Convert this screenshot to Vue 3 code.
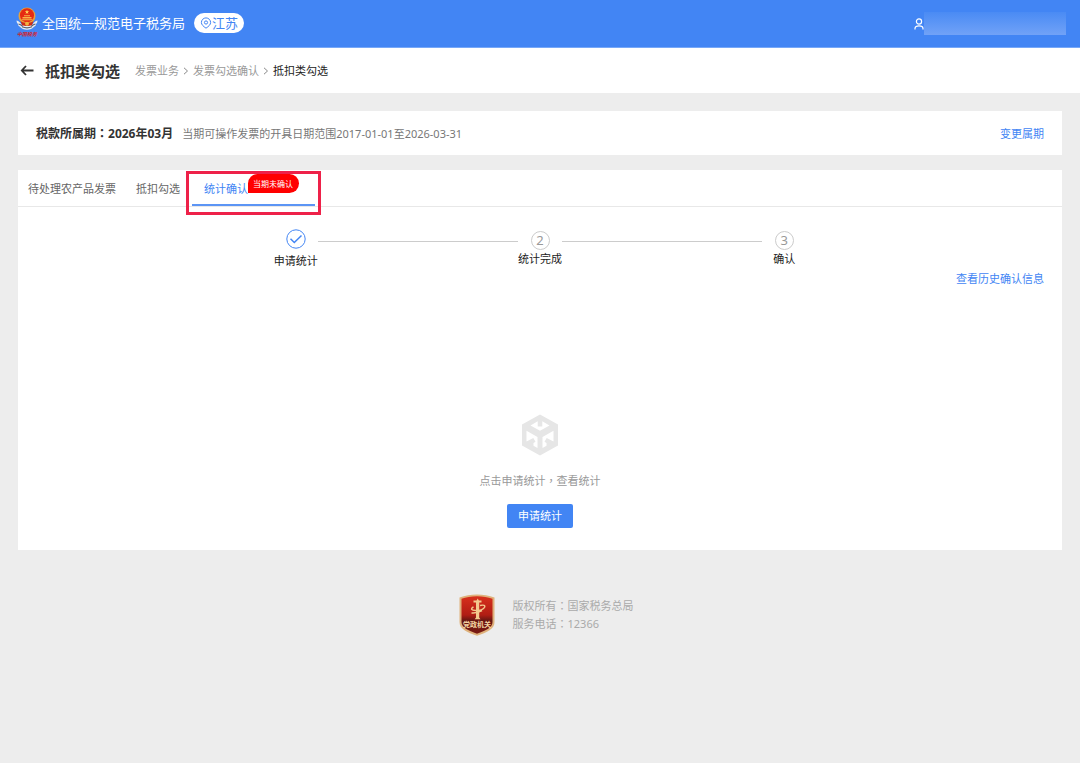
<template>
	<div class="page">
		<header class="topbar">
			<svg class="emblem" viewBox="0 0 22 32" aria-hidden="true">
				<path d="M0.500 13.500c2.500 .6 3.500 2 5 4h11c1.500-2 2.500-3.400 5-4-.1 1.600-.5 2.700-1.500 3.400 0 1.300-.7 2.300-2 2.800-1.500 1.900-4 3-7 3s-5.500-1.100-7-3c-1.300-.5-2-1.500-2-2.800-1-.7-1.400-1.800-1.500-3.400z" fill="#e9edf2"/>
				<path d="M2.500 17c2 .4 3 1.200 4.200 2.200M19.500 17c-2 .4-3 1.200-4.200 2.200" stroke="#5a5f70" stroke-width="1.200" fill="none"/>
				<circle cx="11" cy="9" r="8.500" fill="#e8a13c"/>
				<circle cx="11" cy="8.300" r="7" fill="#e52a12"/>
				<path d="M11 2.800l.6 1.500h1.600l-1.300 1 .5 1.600-1.400-1-1.400 1 .5-1.600-1.300-1h1.600z" fill="#ffd75a"/>
				<path d="M6.500 10h9v1.500h-9zM8 8.300h6v1h-6zM5.800 12.200h10.400v1H5.800z" fill="#f7b648"/>
				<path d="M4.500 14c2 1.500 4 1.700 6.500 1.700s4.500-.2 6.500-1.700l-1.500 4c-1.500.8-3 1-5 1s-3.500-.2-5-1z" fill="#cf2a17"/>
				<circle cx="11" cy="16.800" r="2" fill="#f2b13e"/>
				<path d="M6 19.800c3 1.200 7 1.200 10 0" stroke="#5a5f70" stroke-width="1.200" fill="none"/>
				<text x="11" y="29" text-anchor="middle" class="emblem-text">中国税务</text>
			</svg>
			<span class="site-name">全国统一规范电子税务局</span>
			<button type="button" class="region">
				<svg viewBox="0 0 12 12" width="12" height="12" fill="none" stroke="currentColor" aria-hidden="true">
					<path d="M6 11.200C3.300 9.300 1.400 7.700 1.400 5.500a4.600 4.600 0 0 1 9.200 0C10.600 7.700 8.700 9.300 6 11.200z"/>
					<circle cx="6" cy="5.500" r="1.600"/>
				</svg>
				江苏
			</button>
			<div class="user">
				<svg viewBox="0 0 10 12" width="10" height="12" fill="none" stroke="#fff" stroke-width="1.200" aria-hidden="true">
					<circle cx="5" cy="3.500" r="2.600"/>
					<path d="M1 11.500V10.500C1 8.600 2.500 7.800 5 7.800s4 .8 4 2.700v1"/>
				</svg>
				<span class="user-name"></span>
			</div>
		</header>

		<div class="crumb-bar">
			<button type="button" class="back" aria-label="返回">
				<svg viewBox="0 0 14 12" width="14" height="12" fill="none" stroke="#333" stroke-width="1.800" aria-hidden="true">
					<path d="M6 1L1.800 5.500 6 10M2 5.500h11.500"/>
				</svg>
			</button>
			<h1>抵扣类勾选</h1>
			<nav class="crumbs">
				<template v-for="(item, i) in crumbs" :key="item">
					<svg v-if="i > 0" viewBox="0 0 6 8" width="6" height="8" fill="none" stroke="#888" aria-hidden="true">
						<path d="M1 0.800L4.500 4 1 7.200"/>
					</svg>
					<a v-if="i < crumbs.length - 1" href="#">{{ item }}</a>
					<span v-else class="current">{{ item }}</span>
				</template>
			</nav>
		</div>

		<main>
			<section class="card period">
				<strong>税款所属期<span class="punct">：</span>2026年03月</strong>
				<span class="range">当期可操作发票的开具日期范围2017-01-01至2026-03-31</span>
				<a href="#" class="change">变更属期</a>
			</section>

			<section class="card">
				<div class="tabs" role="tablist">
					<button
						v-for="tab in tabs"
						:key="tab.name"
						type="button"
						role="tab"
						class="tab"
						:class="{ active: tab.name === activeTab }"
						:aria-selected="tab.name === activeTab"
						@click="activeTab = tab.name"
					>
						{{ tab.name }}
						<span v-if="tab.badge" class="badge">{{ tab.badge }}</span>
						<span v-if="tab.badge" class="frame"></span>
					</button>
				</div>

				<div class="steps">
					<template v-for="(step, i) in steps" :key="step">
						<span v-if="i > 0" class="line"></span>
						<div class="step" :class="{ done: i === 0 }">
							<svg v-if="i === 0" viewBox="0 0 20 20" width="20" height="20" fill="none" stroke="#4285f4" aria-hidden="true">
								<circle cx="10" cy="10" r="9.200"/>
								<path d="M4.500 9.800l3.800 3.700 7.200-7" stroke-width="1.500"/>
							</svg>
							<span v-else class="num">{{ i + 1 }}</span>
							<span class="label">{{ step }}</span>
						</div>
					</template>
				</div>

				<div class="history">
					<a href="#">查看历史确认信息</a>
				</div>

				<div class="empty">
					<svg viewBox="0 0 38 42" width="38" height="42" aria-hidden="true">
						<path d="M19 0.500L37 10.500V31.500L19 41.500 1 31.500V10.500z" fill="#e6e6e6"/>
						<path d="M16.700 7.300L9.500 11.500 19 16.800 28.500 11.500 21.300 7.300V12.500h-4.600z" fill="#fff"/>
						<path d="M5.500 16.800L16.500 23V34L12.500 31.800V29L14.500 27.800 12.300 24 5.500 27.500z" fill="#fff"/>
						<path d="M32.500 16.800L21.500 23V34L25.500 31.800V29L23.500 27.800 25.700 24 32.500 27.500z" fill="#fff"/>
					</svg>
					<p>点击申请统计<span class="punct">，</span>查看统计</p>
					<button type="button" class="primary">申请统计</button>
				</div>
			</section>
		</main>

		<footer>
			<svg viewBox="0 0 36 42" width="36" height="42" aria-hidden="true">
				<defs>
					<linearGradient id="shield" x1="0" y1="0" x2="0" y2="1">
						<stop offset="0" stop-color="#d8301c"/>
						<stop offset="0.500" stop-color="#b01d14"/>
						<stop offset="0.650" stop-color="#651712"/>
						<stop offset="1" stop-color="#7c1a12"/>
					</linearGradient>
				</defs>
				<path d="M18 0.500C24 0.500 30 1.500 35.500 3.500V28C35.500 35 28 38.500 18 41.800 8 38.500 0.500 35 0.500 28V3.500C6 1.500 12 0.500 18 0.500z" fill="#dfb27c"/>
				<path d="M18 2.300C24 2.300 29 3.200 33.500 4.800V28C33.500 33.500 27 36.500 18 39.700 9 36.500 2.500 33.500 2.500 28V4.800C7 3.200 12 2.300 18 2.300z" fill="url(#shield)"/>
				<path d="M17 8.500h-2.500V6.500h3L18.700 4.500l1.200 2h2.600v2h-2.300v15l1.300 1.800h-5.800l1.300-1.800z" fill="#f3c98d"/>
				<path d="M21 11.500c4-1 5.500 0 4.500 1.800-1.200 2-5 3.200-9 3.200-4 0-5.500-1.500-2-3.700M12.500 19c4 .3 8-.8 10.500-2.300" stroke="#f3c98d" stroke-width="1.400" fill="none"/>
				<text x="18" y="33" text-anchor="middle" class="shield-text">党政机关</text>
			</svg>
			<div class="info">
				<p>版权所有<span class="punct">：</span>国家税务总局</p>
				<p>服务电话<span class="punct">：</span>12366</p>
			</div>
		</footer>
	</div>
</template>

<script setup>
import { ref } from 'vue';

const crumbs = ['发票业务', '发票勾选确认', '抵扣类勾选'];

const tabs = [
	{ name: '待处理农产品发票' },
	{ name: '抵扣勾选' },
	{ name: '统计确认', badge: '当期未确认' },
];
const activeTab = ref('统计确认');

const steps = ['申请统计', '统计完成', '确认'];
</script>

<style>
body {
	margin: 0;
	background: #ededed;
}
</style>

<style scoped>
.page {
	min-height: 100vh;
	background: #ededed;
	color: #333;
	font-family: "Noto Sans", "Noto Sans CJK SC", sans-serif;
	font-size: 11px;
	line-height: 18px;
}

a {
	color: #4285f4;
	text-decoration: none;
}

button {
	padding: 0;
	border: 0;
	background: none;
	color: inherit;
	font: inherit;
	cursor: pointer;
}

p,
h1 {
	margin: 0;
}

.punct {
	font-family: "Noto Sans CJK TC", sans-serif;
	line-height: 1;
}

.topbar {
	display: flex;
	align-items: center;
	height: 47px;
	padding: 0 14px 0 16px;
	border-bottom: 1px solid #77a8f8;
	background: #4285f4;
	color: #fff;
}

.emblem {
	width: 22px;
	height: 32px;
	margin-bottom: 2px;
}

.emblem-text {
	fill: #d3242f;
	font-size: 5px;
	font-style: italic;
	font-weight: bold;
}

.site-name {
	margin: 0 9px 2px 4px;
	font-size: 13px;
}

.region {
	display: flex;
	align-items: center;
	height: 20px;
	margin-bottom: 2px;
	padding: 0 6px;
	border-radius: 10px;
	background: #fff;
	color: #4285f4;
	font-size: 13px;
}

.user {
	display: flex;
	align-items: center;
	margin-left: auto;
}

.user-name {
	width: 142px;
	height: 23px;
	background: linear-gradient(#4a8bf4, #71a2f7);
}

.crumb-bar {
	display: flex;
	align-items: center;
	height: 45px;
	padding: 0 20px;
	background: #fff;
}

.back {
	display: flex;
}

h1 {
	margin: 0 15px 0 11px;
	font-size: 15px;
	line-height: 20px;
}

.crumbs {
	display: flex;
	align-items: center;
	gap: 4px;
	padding-top: 1px;
}

.crumbs a {
	color: #999;
}

.crumbs .current {
	color: #222;
}

main {
	display: flex;
	flex-direction: column;
	gap: 15px;
	padding: 18px 18px 0;
}

.card {
	background: #fff;
}

.period {
	display: flex;
	align-items: center;
	gap: 9px;
	padding: 14px 18px 12px;
}

.period strong {
	font-size: 12px;
}

.range {
	color: #777;
}

.change {
	margin-left: auto;
}

.tabs {
	display: flex;
	height: 36px;
	border-bottom: 1px solid #e8e8e8;
}

.tab {
	position: relative;
	display: flex;
	align-items: center;
	padding: 2px 10px 0;
	color: #666;
}

.tab.active {
	margin-left: 2px;
	padding: 4px 16px 0 12px;
	border-bottom: 2px solid #5c95f5;
	color: #4285f4;
}

.badge {
	align-self: flex-start;
	padding: 0 6px 0 5px;
	border-radius: 10px 10px 10px 0;
	background: #f00;
	color: #fff;
	font-size: 8px;
	line-height: 19px;
}

.frame {
	position: absolute;
	inset: 1px -6px -11px -6px;
	border: 3px solid #ee2149;
	pointer-events: none;
}

.steps {
	display: flex;
	align-items: flex-start;
	width: 51%;
	margin: 0 auto;
	padding-top: 22px;
}

.step {
	display: flex;
	flex-direction: column;
	align-items: center;
	width: 44px;
	padding-top: 2px;
	color: #222;
}

.step.done {
	gap: 3px;
	padding-top: 0;
}

.num {
	box-sizing: border-box;
	width: 19px;
	height: 19px;
	border: 1px solid #ccc;
	border-radius: 50%;
	color: #999;
	font-size: 13px;
	line-height: 17px;
	text-align: center;
}

.line {
	flex: 1;
	height: 1px;
	margin-top: 12px;
	background: #ccc;
}

.history {
	padding: 0 18px;
	text-align: right;
}

.empty {
	display: flex;
	flex-direction: column;
	align-items: center;
	padding: 126px 0 22px;
	color: #999;
}

.empty p {
	margin: 16px 0 14px;
}

.primary {
	height: 24px;
	padding: 0 11px;
	border-radius: 2px;
	background: #4285f4;
	color: #fff;
}

footer {
	display: flex;
	align-items: center;
	justify-content: center;
	gap: 18px;
	padding: 44px 0 44px 12px;
	color: #aaa;
}

.shield-text {
	fill: #f6d6a4;
	font-size: 7px;
	font-weight: bold;
}
</style>
